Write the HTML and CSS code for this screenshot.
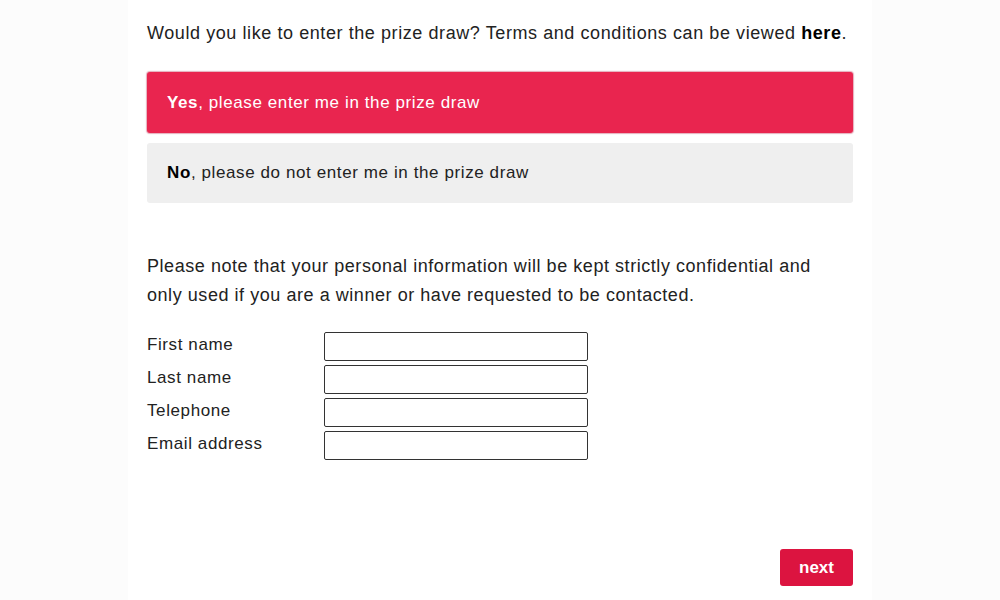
FILE: index.html
```html
<!DOCTYPE html>
<html>
<head>
<meta charset="utf-8">
<link rel="stylesheet" href="styles.css">
</head>
<body>
<div class="page">
  <p class="intro">Would you like to enter the prize draw? Terms and conditions can be viewed <b>here</b>.</p>
  <div class="choice choice-yes"><b>Yes</b>, please enter me in the prize draw</div>
  <div class="choice choice-no"><b>No</b>, please do not enter me in the prize draw</div>
  <p class="note">Please note that your personal information will be kept strictly confidential and only used if you are a winner or have requested to be contacted.</p>
  <div class="form">
    <label class="lbl">First name</label><input class="inp" type="text">
    <label class="lbl">Last name</label><input class="inp" type="text">
    <label class="lbl">Telephone</label><input class="inp" type="text">
    <label class="lbl">Email address</label><input class="inp" type="text">
  </div>
  <div class="actions"><button class="next">next</button></div>
</div>
</body>
</html>
```
FILE: styles.css
```css
html, body {
  margin: 0;
  padding: 0;
  background: #fcfcfc;
  font-family: "Liberation Sans", Arial, sans-serif;
  color: #222;
}
.page {
  width: 706px;
  margin: 0 auto;
  padding: 0 19px;
  background: #fff;
  height: 600px;
  box-sizing: content-box;
}
.intro {
  margin: 0;
  padding-top: 22px;
  font-size: 18px;
  line-height: 22px;
  letter-spacing: 0.58px;
}
.intro b { color: #000; }
.choice {
  box-sizing: border-box;
  height: 61px;
  display: flex;
  align-items: center;
  padding: 0 20px;
  font-size: 17px;
  letter-spacing: 0.6px;
  border-radius: 3px;
}
.choice-yes {
  margin-top: 28px;
  background: #e9254f;
  color: #fff;
  box-shadow: 0 0 1px 1px rgba(180, 20, 60, 0.35);
}
.choice-no {
  margin-top: 10px;
  height: 60px;
  background: #efefef;
  color: #222;
}
.choice-no b { color: #000; }
.note {
  margin: 49px 0 0;
  max-width: 680px;
  font-size: 18px;
  line-height: 29px;
  letter-spacing: 0.55px;
}
.form {
  margin-top: 22px;
  display: grid;
  grid-template-columns: 177px 264px;
  row-gap: 4px;
  align-items: center;
}
.lbl {
  font-size: 17px;
  letter-spacing: 0.6px;
  line-height: 29px;
  align-self: start;
  margin-top: -2px;
}
.inp {
  box-sizing: border-box;
  width: 264px;
  height: 29px;
  border: 1px solid #333;
  border-radius: 2px;
  margin: 0;
  background: #fff;
}
.actions {
  display: flex;
  justify-content: flex-end;
  margin-top: 89px;
}
.next {
  width: 73px;
  height: 37px;
  background: #dc1440;
  color: #fff;
  border: none;
  border-radius: 3px;
  font-family: "Liberation Sans", Arial, sans-serif;
  font-weight: bold;
  font-size: 17px;
  padding: 0;
}
```
